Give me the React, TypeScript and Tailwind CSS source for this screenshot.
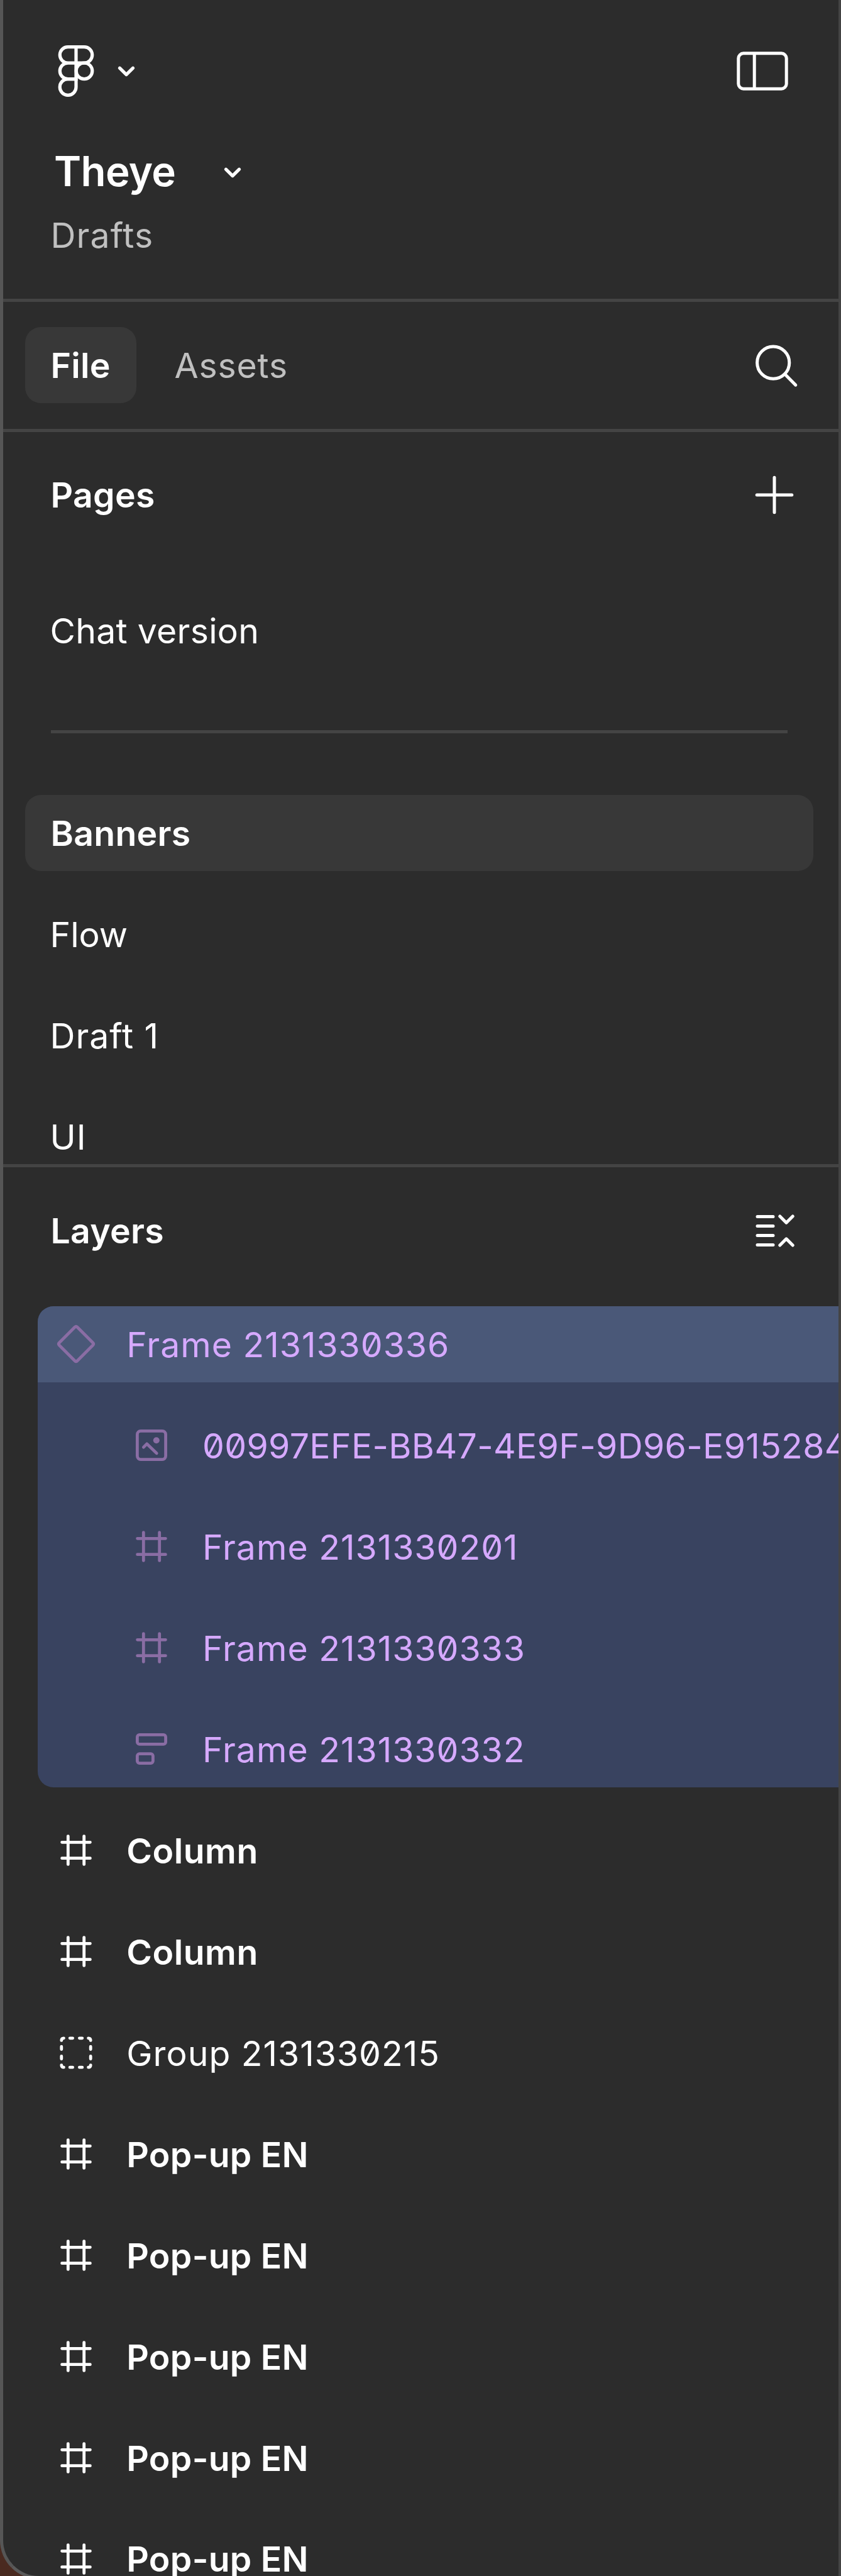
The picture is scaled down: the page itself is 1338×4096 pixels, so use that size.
import type { ReactNode } from "react";

const Chevron = ({ className }: { className: string }) => (
  <svg className={className} width="30" height="22" viewBox="0 0 30 22" fill="none" stroke="#fff" strokeWidth="5.2" strokeLinecap="round" strokeLinejoin="round">
    <path d="M4.4 5.2 15 15.6 25.6 5.2" />
  </svg>
);

const FigmaLogo = () => (
  <svg width="58" height="84" viewBox="0 0 58 84" fill="none" stroke="#fff" strokeWidth="5.2">
    <path d="M29 3.6H16a12.75 12.75 0 0 0 0 25.5h13zM29 3.6h13a12.75 12.75 0 0 1 0 25.5H29zM29 29.1H16a12.75 12.75 0 0 0 0 25.5h13z" />
    <circle cx="42" cy="41.8" r="12.8" />
    <path d="M29 54.6H16a12.9 12.9 0 1 0 13 12.9z" />
  </svg>
);

const SidebarIcon = () => (
  <svg width="82" height="62" viewBox="0 0 82 62" fill="none" stroke="#fff" strokeWidth="5">
    <rect x="2.8" y="2.8" width="76.4" height="56.4" rx="8" />
    <path d="M28.2 3v56" />
  </svg>
);

const SearchIcon = () => (
  <svg width="68" height="68" viewBox="0 0 68 68" fill="none" stroke="#fff" strokeWidth="5" strokeLinecap="round">
    <circle cx="28.2" cy="28.7" r="25.6" />
    <path d="M47 47.3 63.8 64.2" />
  </svg>
);

const PlusIcon = () => (
  <svg width="62" height="62" viewBox="0 0 62 62" stroke="#fff" strokeWidth="5" strokeLinecap="round">
    <path d="M3.2 31h55.6M31 3.2v55.6" />
  </svg>
);

const CollapseIcon = () => (
  <svg width="62" height="54" viewBox="0 0 62 54" fill="none" stroke="#fff" strokeWidth="5" strokeLinecap="round" strokeLinejoin="round">
    <path d="M3 4.4h25M3 19.4h25M3 34.5h25M3 49.6h25M38.8 4l10.2 10.2L59.2 4M38.8 50 49 39.8 59.2 50" />
  </svg>
);

const FrameIcon = () => (
  <svg width="50" height="50" viewBox="0 0 50 50" stroke="currentColor" strokeWidth="4.8" strokeLinecap="round">
    <path d="M12.3 2.6v44.8M37.7 2.6v44.8M2.6 12.3h44.8M2.6 37.7h44.8" />
  </svg>
);

const DiamondIcon = () => (
  <svg width="62" height="62" viewBox="0 0 62 62" fill="none" stroke="currentColor" strokeWidth="4.8" strokeLinejoin="round">
    <path d="M29 4.3 4.3 29q-2 2 0 4L29 57.7q2 2 4 0L57.7 33q2-2 0-4L33 4.3q-2-2-4 0z" />
  </svg>
);

const ImageIcon = () => (
  <svg width="50" height="50" viewBox="0 0 50 50" fill="none" stroke="currentColor" strokeWidth="4.8" strokeLinecap="round" strokeLinejoin="round">
    <rect x="2.4" y="2.4" width="45.2" height="45.2" rx="5.5" />
    <path d="m12.4 28.2 5.2-5.4 15.6 15" />
    <circle cx="32.8" cy="17.3" r="5" fill="currentColor" stroke="none" />
  </svg>
);

const StackIcon = () => (
  <svg width="50" height="50" viewBox="0 0 50 50" fill="none" stroke="currentColor" strokeWidth="4.8">
    <rect x="2.4" y="2.4" width="45.2" height="15" rx="3.5" />
    <rect x="2.4" y="32.6" width="25" height="15" rx="3.5" />
  </svg>
);

const GroupIcon = () => (
  <svg width="52" height="52" viewBox="0 0 52 52" fill="none" stroke="currentColor" strokeWidth="4.8" strokeLinecap="round">
    <path d="M2.8 6.4q0-3.6 3.6-3.6M45.6 2.8q3.6 0 3.6 3.6M49.2 45.6q0 3.6-3.6 3.6M6.4 49.2q-3.6 0-3.6-3.6" />
    <path d="M16.2 2.8h4.4M31.4 2.8h4.4M16.2 49.2h4.4M31.4 49.2h4.4M2.8 16.2v4.4M2.8 31.4v4.4M49.2 16.2v4.4M49.2 31.4v4.4" />
  </svg>
);

const Divider = () => <div className="h-[5px] shrink-0 bg-[#444444]" />;

const PageRow = ({ name, active, tracking = "" }: { name: string; active?: boolean; tracking?: string }) => (
  <div
    className={
      active
        ? "mr-[40px] ml-[35px] flex h-[120.7px] shrink-0 items-center rounded-[25px] bg-[#383838] pl-[40.5px] font-semibold"
        : "mr-[40px] ml-[35px] flex h-[120.7px] shrink-0 items-center pl-[39.5px]"
    }
  >
    <span className={tracking}>{name}</span>
  </div>
);

const LayerRow = ({ icon, name, className }: { icon: ReactNode; name: string; className: string }) => (
  <div className="flex h-[120.7px] shrink-0 items-center">
    <div className="flex w-[121px] shrink-0 justify-center">{icon}</div>
    <span className={`pl-[20px] whitespace-nowrap ${className}`}>{name}</span>
  </div>
);

const Tinted = ({ children }: { children: ReactNode }) => <span className="text-[#8a6da4]">{children}</span>;

const popups = ["popup-1", "popup-2", "popup-3", "popup-4", "popup-5"];

export default function App() {
  return (
    <div className="h-[4096px] w-[1338px] overflow-hidden bg-[#4a2a20]">
      <div className="flex h-[4101px] w-[1338px] flex-col overflow-hidden rounded-bl-[62px] border-r-[4px] border-b-[5px] border-l-[5px] border-r-[#444444] border-b-[#5a5a5a] border-l-[#565656] bg-[#2c2c2c] font-['Inter',sans-serif] text-[55.33px] leading-none tracking-[0.28px] text-white [font-feature-settings:'zero']">
        <header className="flex h-[475px] shrink-0 flex-col">
          <div className="flex h-[225px] items-center pr-[80.5px] pl-[87px]">
            <FigmaLogo />
            <Chevron className="mt-[2px] ml-[36px]" />
            <div className="ml-auto">
              <SidebarIcon />
            </div>
          </div>
          <div className="flex h-[95px] items-center pl-[81px]">
            <span className="w-[240px] text-[65.4px] font-semibold tracking-[-0.65px]">Theye</span>
            <Chevron className="mt-[4px] ml-[29px]" />
          </div>
          <div className="flex h-[108px] items-center pl-[75.5px] tracking-[1.1px] text-[#c0c0c0]">Drafts</div>
        </header>
        <Divider />
        <nav className="flex h-[201.5px] shrink-0 items-center pl-[35px]">
          <div className="flex h-[120.7px] w-[177px] items-center rounded-[25px] bg-[#383838] pl-[40.5px] font-semibold">File</div>
          <div className="ml-[60.5px] tracking-[0.8px] text-[#c0c0c0]">Assets</div>
          <div className="mt-[3px] mr-[64px] ml-auto">
            <SearchIcon />
          </div>
        </nav>
        <Divider />
        <section className="flex h-[1164.5px] shrink-0 flex-col overflow-hidden">
          <div className="flex h-[201px] shrink-0 items-center justify-between pr-[71px] pl-[75.5px] font-semibold">
            Pages
            <PlusIcon />
          </div>
          <div className="mt-[54.5px] flex shrink-0 flex-col">
            <PageRow name="Chat version" />
            <div className="mt-[98.6px] mr-[81px] mb-[98px] ml-[75.5px] h-[5px] shrink-0 bg-[#444444]" />
            <div className="flex flex-col gap-[40.2px]">
              <PageRow name="Banners" active />
              <PageRow name="Flow" tracking="tracking-[0px]" />
              <PageRow name="Draft 1" tracking="tracking-[1px]" />
              <PageRow name="UI" tracking="tracking-[1px]" />
            </div>
          </div>
        </section>
        <Divider />
        <section className="flex flex-col">
          <div className="flex h-[201px] shrink-0 items-center justify-between pr-[70.3px] pl-[75.5px] font-semibold">
            Layers
            <CollapseIcon />
          </div>
          <div className="mt-[20px] ml-[55.3px] flex flex-col gap-[40.3px]">
            <div className="overflow-hidden rounded-l-[25px] bg-[#394360] text-[#d6a9ff]">
              <div className="bg-[#4a5878]">
                <LayerRow icon={<Tinted><DiamondIcon /></Tinted>} name="Frame 2131330336" className="tracking-[1px]" />
              </div>
              <div className="mt-[40.3px] flex flex-col gap-[40.3px] pl-[120.7px]">
                <LayerRow icon={<Tinted><ImageIcon /></Tinted>} name="00997EFE-BB47-4E9F-9D96-E915284" className="tracking-[0.34px]" />
                <LayerRow icon={<Tinted><FrameIcon /></Tinted>} name="Frame 2131330201" className="tracking-[1px]" />
                <LayerRow icon={<Tinted><FrameIcon /></Tinted>} name="Frame 2131330333" className="tracking-[1px]" />
                <LayerRow icon={<Tinted><StackIcon /></Tinted>} name="Frame 2131330332" className="tracking-[1px]" />
              </div>
            </div>
            <LayerRow icon={<FrameIcon />} name="Column" className="font-semibold tracking-[0.5px]" />
            <LayerRow icon={<FrameIcon />} name="Column" className="font-semibold tracking-[0.5px]" />
            <LayerRow icon={<GroupIcon />} name="Group 2131330215" className="tracking-[1px]" />
            {popups.map((id) => (
              <LayerRow key={id} icon={<FrameIcon />} name="Pop-up EN" className="font-semibold" />
            ))}
          </div>
        </section>
      </div>
    </div>
  );
}
